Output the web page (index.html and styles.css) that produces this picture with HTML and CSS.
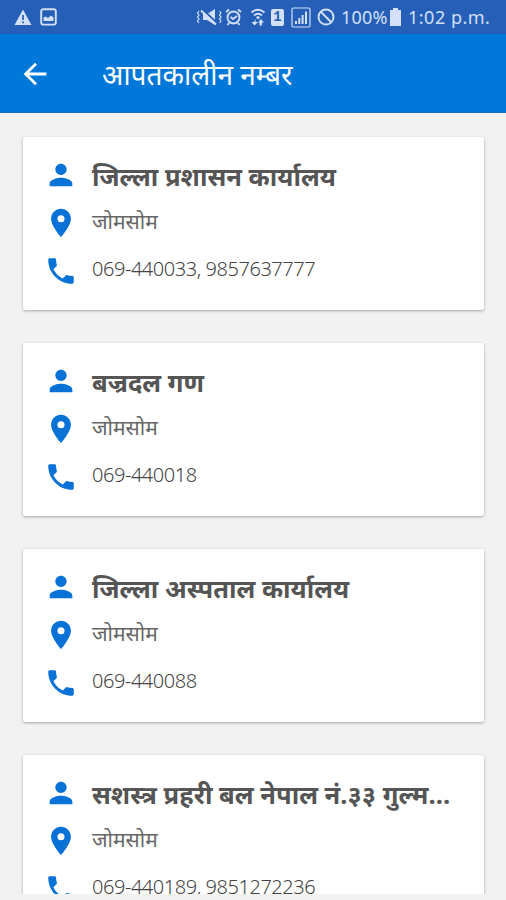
FILE: index.html
```
<!DOCTYPE html>
<html lang="ne">
<head>
<meta charset="utf-8">
<title>आपतकालीन नम्बर</title>
<link rel="stylesheet" href="styles.css">
</head>
<body>
<svg class="defs" width="0" height="0">
  <symbol id="person" viewBox="0 0 24 24"><path d="M12 12c2.21 0 4-1.79 4-4s-1.79-4-4-4-4 1.79-4 4 1.790 4 4 4zm0 2c-2.670 0-8 1.340-8 4v2h16v-2c0-2.660-5.330-4-8-4z"/></symbol>
  <symbol id="place" viewBox="0 0 24 24"><path d="M12 2C8.130 2 5 5.130 5 9c0 5.250 7 13 7 13s7-7.750 7-13c0-3.870-3.130-7-7-7zm0 9.500a2.500 2.500 0 1 1 0-5 2.500 2.500 0 0 1 0 5z"/></symbol>
  <symbol id="phone" viewBox="0 0 24 24"><path d="M6.620 10.790c1.440 2.830 3.760 5.140 6.590 6.590l2.200-2.200c.27-.27.67-.36 1.020-.24 1.120.37 2.330.57 3.570.57.55 0 1 .45 1 1V20c0 .55-.45 1-1 1C10.610 21 3 13.390 3 4c0-.55.45-1 1-1h3.500c.55 0 1 .45 1 1 0 1.250.2 2.450.57 3.570.11.35.03.74-.25 1.020l-2.200 2.200z"/></symbol>
</svg>
<div class="status">
  <div class="left">
    <svg class="warn" width="18" height="17" viewBox="0 0 18 17"><path d="M9 .5 17.500 16H.5z"/><path class="cut" d="M8.200 6h1.700v5H8.200zM8.200 12.500h1.700v1.800H8.200z"/></svg>
    <svg width="17" height="18" viewBox="0 0 17 18"><rect class="line" x="1.200" y="1.200" width="14.600" height="15.400" rx="2"/><path d="M3.500 13V9.500l2.500-1 2 1.500 3-2.500 2.500 2V13z"/></svg>
  </div>
  <div class="right">
    <svg class="mute" width="27" height="18" viewBox="0 0 27 18"><path d="M7 6h4l8-5v16l-8-5H7z"/><path class="slash" d="M6 1l15 14"/><path class="line" d="M5 2.500l15 14"/><path class="thin" d="M3 3L1.500 5 3 7 1.500 9 3 11l-1.500 2L3 15M23.500 3l1.500 2-1.500 2 1.500 2-1.500 2 1.500 2-1.500 2"/></svg>
    <svg class="alarm" width="17" height="18" viewBox="0 0 17 18"><circle class="line" cx="8.500" cy="9.500" r="6"/><path class="line" d="M1 4l3-2.500M16 4l-3-2.500M5.500 9l2.500 2 4-3M4 15l-1.500 2M13 15l1.500 2"/></svg>
    <svg class="wifi" width="16" height="18" viewBox="0 0 16 18"><path class="line" d="M1.500 4.500Q8-1 14.500 4.500M4 7.500q4-3.500 8 0"/><circle cx="8" cy="9.500" r="1.600"/><path d="M5.500 11v3H8l-3.500 3.500L1.500 14H4zM9.500 17.500v-3H8l3-3.500 3 3.500h-2v3z"/></svg>
    <span class="sim">1</span>
    <svg class="signal" width="20" height="21" viewBox="0 0 20 21"><rect class="thin" x="1" y="1" width="18" height="19" rx="1.500"/><path d="M4 14h2v3H4zM7.300 11h2v6h-2zM10.600 8h2v9h-2zM14 4.500h2V17h-2z"/></svg>
    <svg class="block" width="18" height="18" viewBox="0 0 18 18"><circle class="line" cx="9" cy="9" r="7.500"/><path class="line" d="M4 4l10 10"/></svg>
    <span class="pct">100%</span>
    <svg class="battery" width="11" height="18" viewBox="0 0 11 18"><path d="M3 0h5v2h3v16H0V2h3z"/></svg>
    <span class="time">1:02 p.m.</span>
  </div>
</div>
<header class="bar">
  <svg class="back" width="34" height="34" viewBox="0 0 24 24"><path d="M20 11H7.830l5.590-5.590L12 4l-8 8 8 8 1.410-1.410L7.830 13H20z"/></svg>
  <h1>आपतकालीन नम्बर</h1>
</header>
<main class="list">
  <section class="card">
    <div class="row"><svg><use href="#person"/></svg><h2>जिल्ला प्रशासन कार्यालय</h2></div>
    <div class="row"><svg><use href="#place"/></svg><p>जोमसोम</p></div>
    <div class="row"><svg><use href="#phone"/></svg><p class="num">069-440033, 9857637777</p></div>
  </section>
  <section class="card">
    <div class="row"><svg><use href="#person"/></svg><h2>बज्रदल गण</h2></div>
    <div class="row"><svg><use href="#place"/></svg><p>जोमसोम</p></div>
    <div class="row"><svg><use href="#phone"/></svg><p class="num">069-440018</p></div>
  </section>
  <section class="card">
    <div class="row"><svg><use href="#person"/></svg><h2>जिल्ला अस्पताल कार्यालय</h2></div>
    <div class="row"><svg><use href="#place"/></svg><p>जोमसोम</p></div>
    <div class="row"><svg><use href="#phone"/></svg><p class="num">069-440088</p></div>
  </section>
  <section class="card">
    <div class="row"><svg><use href="#person"/></svg><h2>सशस्त्र प्रहरी बल नेपाल नं.३३ गुल्म…</h2></div>
    <div class="row"><svg><use href="#place"/></svg><p>जोमसोम</p></div>
    <div class="row"><svg><use href="#phone"/></svg><p class="num">069-440189, 9851272236</p></div>
  </section>
</main>
</body>
</html>
```
FILE: styles.css
```
* { box-sizing: border-box; margin: 0; padding: 0; }
body {
  width: 506px; height: 900px; overflow: hidden;
  display: flex; flex-direction: column;
  background: #f2f2f2;
  font-family: "Noto Sans", sans-serif;
}
.defs { position: absolute; }
.status {
  flex: none; height: 34px; padding: 0 14px;
  display: flex; justify-content: space-between; align-items: center;
  background: #255fb8; color: #d3e0f7;
}
.status svg { flex: none; fill: #d3e0f7; }
.status .line { fill: none; stroke: #d3e0f7; stroke-width: 1.9; }
.status .thin { fill: none; stroke: #d3e0f7; stroke-width: 1.2; }
.status .cut { fill: #255fb8; }
.status .slash { stroke: #255fb8; stroke-width: 2; }
.left { display: flex; align-items: center; gap: 8px; }
.right { display: flex; align-items: center; font-size: 18px; letter-spacing: .2px; white-space: nowrap; }
.alarm { margin-left: 2px; margin-right: 2px; }
.wifi { margin-left: 6px; }
.sim {
  width: 13px; height: 17px; margin-left: 5px; margin-right: 1px; border-radius: 2px;
  background: #d3e0f7; color: #255fb8;
  font: 700 14px/17px "Liberation Mono", monospace; text-align: center;
}
.signal { margin-left: 6px; margin-right: 1px; }
.block { margin-left: 5px; margin-right: 1px; }
.pct { width: 47px; margin-left: 5px; }
.battery { margin-left: 2px; margin-right: 1px; }
.time { width: 84px; margin-left: 6px; letter-spacing: .5px; }
.bar {
  flex: none; height: 79px; padding: 0 18px;
  display: flex; align-items: center;
  background: #0078d9; color: #fff;
  border-bottom: 1px solid #1c6fbd;
}
.back { fill: #fff; margin-top: 1px; }
.bar h1 { margin-left: 50px; padding-top: 2px; font-size: 28px; font-weight: 400; line-height: 40px; }
.list {
  flex: none; height: 781px; padding: 24px 22px 0 23px;
  display: flex; flex-direction: column; gap: 33.5px;
  overflow: hidden;
}
.card {
  flex: none; height: 172.5px; padding: 14px 21px;
  border-radius: 2px; background: #fff;
  box-shadow: 0 1px 3px rgba(0, 0, 0, .32);
}
.row { height: 48px; display: flex; align-items: center; }
.row svg { flex: none; width: 34px; height: 34px; fill: #0872d6; }
.row h2, .row p { margin-left: 14px; white-space: nowrap; color: #555; }
.row h2 { padding-top: 2px; font-size: 25.5px; font-weight: 700; line-height: 36px; }
.row p { padding-bottom: 4px; font-size: 21px; line-height: 32px; color: #666; }
.row .num { font-size: 20px; font-weight: 300; letter-spacing: -.45px; color: #444; }
```
